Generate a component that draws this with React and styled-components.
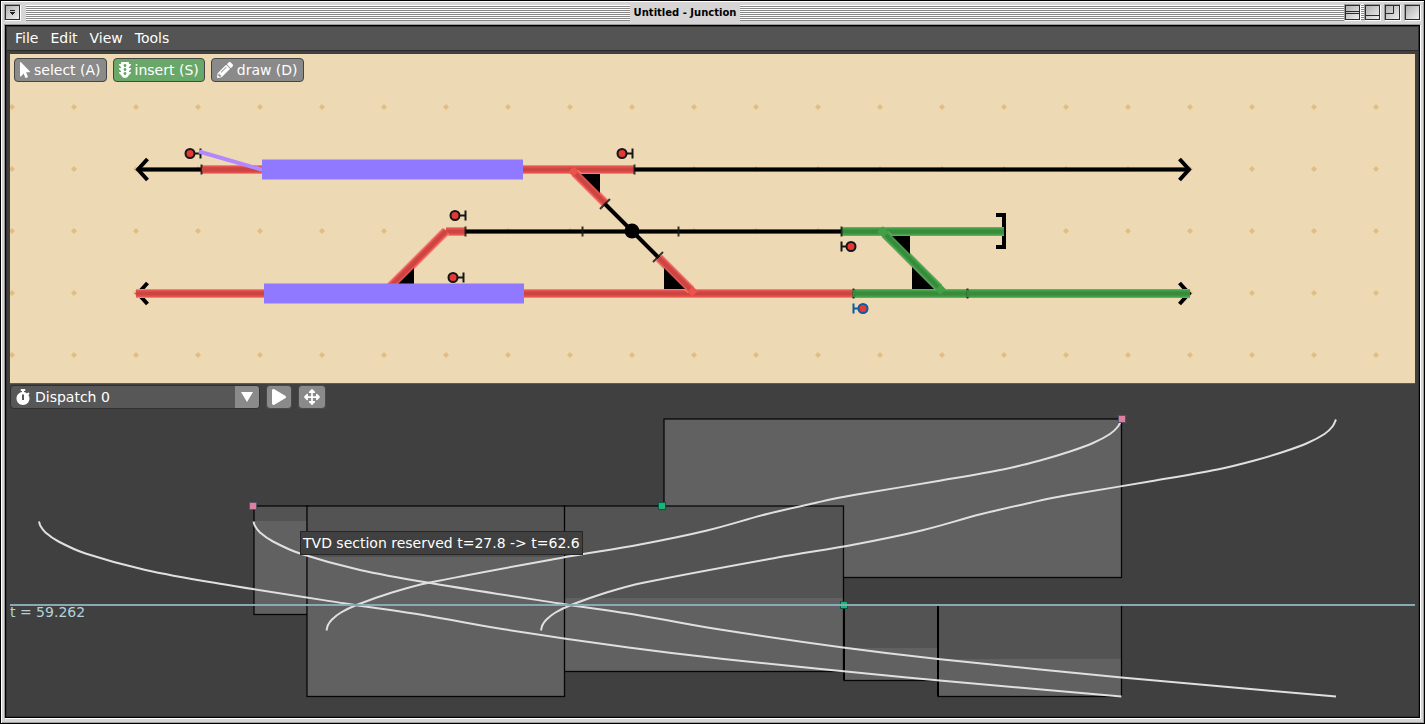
import React from "react";
import styled, { createGlobalStyle } from "styled-components";
import {
  FaMousePointer,
  FaTrafficLight,
  FaPencilAlt,
  FaStopwatch,
  FaPlay,
  FaArrowsAlt,
} from "react-icons/fa";

const GlobalStyle = createGlobalStyle`
  * { box-sizing: border-box; }
  body {
    margin: 0;
    font-family: "DejaVu Sans", Verdana, sans-serif;
    font-size: 14px;
    line-height: 16px;
    color: #fff;
  }
  button, select { font: inherit; color: inherit; }
`;

/* ---------- window frame ---------- */

const Window = styled.div`
  display: flex;
  flex-direction: column;
  min-height: 100vh;
  padding: 0 3px 4px;
  border: 1px solid #000;
  background: #d6d4d5;
  box-shadow: inset 1px 1px #fff, inset -1px -1px #a0a0a0;
`;

const TitleBar = styled.header`
  display: flex;
  align-items: center;
  height: 23px;
`;

const Stripes = styled.div`
  flex: 1 1 0;
  height: 16px;
  background: repeating-linear-gradient(#fff 0 1px, #888 1px 2px);
`;

const StripeGap = styled(Stripes)`
  flex: 0 0 3px;
  margin: 0 -3px;
`;

const Title = styled.h1`
  margin: 0;
  padding: 0 4px;
  font-size: 10px;
  line-height: 16px;
  font-weight: bold;
  color: #000;
`;

const FrameButton = styled.button`
  display: block;
  flex: none;
  width: 17px;
  height: 17px;
  padding: 0;
  border: 1px solid;
  border-color: #999 #fff #fff #999;
  background: linear-gradient(135deg, #aaa, #f4f4f4);

  svg {
    display: block;
  }
`;

const FrameButtons = styled.div`
  display: flex;
  gap: 3px;
`;

const MenuCorner = styled(FrameButtons)`
  padding-right: 5px;
`;

const Client = styled.div`
  flex: 1;
  display: flex;
  flex-direction: column;
  border: 1px solid;
  border-color: #999 #fff #fff #999;
  background: #404040;
`;

const ClientEdge = styled.div`
  flex: 1;
  display: flex;
  flex-direction: column;
  border: 1px solid #000;
  box-shadow: inset 0 0 0 1px #303030;
  padding: 1px;
`;

const MenuBar = styled.nav`
  display: flex;
  align-items: flex-start;
  gap: 12px;
  height: 24px;
  padding: 3px 8px;
  background: #545454;
  border-bottom: 1px solid #2b2b2b;
`;

const MenuItem = styled.button`
  padding: 0;
  border: 0;
  background: none;
`;

/* ---------- schematic ---------- */

const Workspace = styled.main`
  flex: 1;
  display: flex;
  flex-direction: column;
  padding: 3px 3px 0;
`;

const Schematic = styled.section`
  position: relative;
  height: 330px;
  background: #eed9b5;
  border-bottom: 1px solid #5f5e56;
`;

const Drawing = styled.svg`
  display: block;
  width: 100%;
  height: 100%;
`;

const ToolBar = styled.div`
  position: absolute;
  top: 4px;
  left: 4px;
  display: flex;
  gap: 6px;
`;

const ToolButton = styled.button`
  display: flex;
  align-items: center;
  gap: 4px;
  height: 24px;
  padding: 0 5px;
  border: 1px solid #454545;
  border-radius: 4px;
  background: ${(p) => (p.$active ? "#69a869" : "#8a8a8a")};
  white-space: nowrap;

  svg {
    flex: none;
    width: ${(p) => p.$iconWidth};
    height: 16px;
  }
`;

/* ---------- dispatch ---------- */

const DispatchBar = styled.div`
  display: flex;
  gap: 6px;
  margin-top: 1px;
`;

const Combo = styled.div`
  display: grid;
  grid-template-columns: 24px 1fr 24px;
  align-items: center;
  justify-items: center;
  width: 250px;
  height: 24px;
  border: 1px solid #303030;
  border-radius: 4px;
  overflow: hidden;
  background: #575757;
`;

const ComboIcon = styled.span`
  grid-row: 1;
  grid-column: 1;
  display: grid;
  place-items: center;
  width: 24px;
  height: 22px;
  z-index: 1;
  pointer-events: none;
`;

const ComboArrow = styled(ComboIcon)`
  grid-column: 3;
  background: #8a8a8a;
`;

const ComboSelect = styled.select`
  grid-row: 1;
  grid-column: 1 / -1;
  width: 100%;
  height: 22px;
  padding: 0 24px;
  border: 0;
  appearance: none;
  background: transparent;
`;

const IconButton = styled.button`
  display: grid;
  place-items: center;
  width: ${(p) => (p.$wide ? "28px" : "26px")};
  height: 24px;
  padding: 0;
  border: 1px solid #4a4a4a;
  border-radius: 4px;
  background: #8a8a8a;
`;

const Chart = styled.section`
  position: relative;
  flex: 1 0 307px;
  display: flex;

  text {
    font-size: 14px;
    fill: #b3d3da;
  }
`;

const Tooltip = styled.div`
  position: absolute;
  left: 290px;
  top: 122px;
  height: 24px;
  padding: 3px 2px;
  border: 1px solid #262626;
  background: #404040;
  white-space: nowrap;
`;

/* ---------- schematic drawing ---------- */

const RED = ["#f0837a", "#e7544f", "#cc4541"];
const GREEN = ["#64ad62", "#43a047", "#388a3c"];

function Plain({ d }) {
  return (
    <g fill="none" stroke="#000">
      <path d={d} strokeWidth="5" strokeOpacity="0.6" />
      <path d={d} strokeWidth="3" />
    </g>
  );
}

function Route({ d, colors }) {
  return (
    <g fill="none">
      <path d={d} stroke={colors[0]} strokeWidth="9" />
      <path d={d} stroke={colors[1]} strokeWidth="7" />
      <path d={d} stroke={colors[2]} strokeWidth="4" />
    </g>
  );
}

function Signal({ x, y, facing = 1, color = "#161616" }) {
  return (
    <g stroke={color} fill="none">
      <path d={`M${x} ${y}h${10 * facing}`} strokeWidth="2" />
      <path d={`M${x + 10 * facing + 0.5} ${y - 5}v10`} strokeWidth="2" />
      <circle cx={x} cy={y} r="4.5" fill="#e53935" strokeWidth="2" />
    </g>
  );
}

const JOINTS = [
  [201.5, 169.5],
  [634.5, 169.5],
  [465.5, 231.5],
  [582.5, 231.5],
  [678.5, 231.5],
  [841.5, 231.5],
  [853.5, 293.5],
  [967.5, 293.5],
];

function TrackPlan() {
  return (
    <Drawing role="img" aria-label="Track plan">
      <defs>
        <pattern id="grid" x="-29" y="22" width="62" height="62" patternUnits="userSpaceOnUse">
          <path d="M31 28l3 3l-3 3l-3-3z" fill="#e0bd82" />
        </pattern>
      </defs>
      <rect width="100%" height="100%" fill="url(#grid)" />
      <g transform="translate(-10 -54)">
        <g fill="none" stroke="#000" strokeWidth="4">
          <path d="M147.500 159L138 169.500L147.500 180" />
          <path d="M147.500 283L138 293.500L147.500 304" />
          <path d="M1179.500 159L1189 169.500L1179.500 180" />
          <path d="M1179.500 283L1189 293.500L1179.500 304" />
          <path d="M996 215H1004V247H996" />
        </g>

        <Plain d="M138 169.500H201M634 169.500H1189" />
        <Plain d="M465 231.500H842" />
        <path d="M604 203L659 258" stroke="#000" strokeWidth="4" />
        <circle cx="632" cy="231" r="7.500" />

        <Route d="M201 169.500H634" colors={RED} />
        <Route d="M136 293.500H853" colors={RED} />
        <Route d="M446 231.500H465" colors={RED} />
        <Route d="M841 231.500H1004" colors={GREEN} />
        <Route d="M853 293.500H1190" colors={GREEN} />

        <Route d="M446 231L384 293" colors={RED} />
        <Route d="M575 173L605 203" colors={RED} />
        <Route d="M659 258L691 290" colors={RED} />
        <Route d="M885 234L939 288" colors={GREEN} />
        <g strokeWidth="8">
          <path d="M571 169L576 174M690 289L695 294" stroke="#ec524e" />
          <path d="M880 229L886 235M938 287L943 292" stroke="#43a047" />
        </g>

        <path d="M581 174H600V193z" />
        <path d="M664 268V289H685z" />
        <path d="M414 268V289H393z" />
        <path d="M892 236H910V254z" />
        <path d="M912 267V289H934z" />

        <g fill="none" stroke="#161616" strokeOpacity="0.85" strokeWidth="2">
          {JOINTS.map(([x, y]) => (
            <path key={`${x}-${y}`} d={`M${x} ${y - 5}v10`} />
          ))}
          <path d="M600 209L610 199M653 262L663 252" />
        </g>
        <path d="M202 169.500H262" stroke="#cc4541" strokeWidth="4" />
        <path d="M968 290V297M854 290V297" stroke="#388a3c" strokeWidth="3" />

        <Signal x={190} y={153.5} />
        <Signal x={622} y={153.5} />
        <Signal x={455} y={215.5} />
        <Signal x={453} y={277.5} />
        <Signal x={851} y={246.5} facing={-1} />
        <Signal x={863} y={308.5} facing={-1} color="#0b5aa2" />

        <path d="M199 151.500L263 170" stroke="#b388ff" strokeWidth="4" />
        <g fill="#9179ff">
          <rect x="262" y="159.500" width="261" height="20" />
          <rect x="264" y="283.500" width="260" height="20" />
        </g>
      </g>
    </Drawing>
  );
}

/* ---------- time/distance chart ---------- */

const SECTIONS = [
  { x: 664, y: 419, w: 457, h: 158, split: 0 },
  { x: 254, y: 506, w: 53, h: 108, split: 15 },
  { x: 564, y: 506, w: 279, h: 165, split: 92 },
  { x: 307, y: 506, w: 257, h: 190, split: 51 },
  { x: 844, y: 605, w: 94, h: 75, split: 43 },
  { x: 938, y: 605, w: 183, h: 91, split: 54 },
];

const DOWN = [
  [253.5, 521.5], [255, 526], [260, 532.5], [273, 541.5], [300, 553.5],
  [360, 570], [433, 583.5], [560, 603.5], [640, 615.5], [720, 629.5],
  [843, 647.5], [938, 659], [1121.5, 677.5], [1336, 696.5],
];

const UP = [
  [326.5, 630.5], [328, 625], [332, 619.5], [341, 612.5], [356.5, 605],
  [392, 592.5], [430, 582.5], [563, 557.5], [640, 544.5], [707, 530.5],
  [767, 514], [817, 502.5], [843, 497], [938, 481], [1003, 469.5],
  [1040, 460.5], [1070, 451.5], [1093, 443], [1110, 434], [1118, 426.5],
  [1121.5, 419.5],
];

const TRAIN_LENGTH = 214.5;

const shift = (points, dx) => points.map(([x, y]) => [x + dx, y]);

/* Smooth spline through the points, written as cubic segments. */
function smooth(points) {
  const at = (i) => points[Math.max(0, Math.min(points.length - 1, i))];
  const len = (p, q) => Math.hypot(q[0] - p[0], q[1] - p[1]);
  let d = `M${points[0].join(" ")}`;
  for (let i = 0; i < points.length - 1; i += 1) {
    const [a, b, c, e] = [at(i - 1), at(i), at(i + 1), at(i + 2)];
    const span = len(b, c);
    const tangent = (p, q) => {
      const l = len(p, q) || 1;
      return [((q[0] - p[0]) / l) * (span / 3), ((q[1] - p[1]) / l) * (span / 3)];
    };
    const t1 = tangent(a, c);
    const t2 = tangent(b, e);
    d += `C${b[0] + t1[0]} ${b[1] + t1[1]} ${c[0] - t2[0]} ${c[1] - t2[1]} ${c[0]} ${c[1]}`;
  }
  return d;
}

const CURVES = [DOWN, shift(DOWN, -TRAIN_LENGTH), UP, shift(UP, TRAIN_LENGTH)];

const HANDLES = [
  { x: 253, y: 506, fill: "#df7f9f", edge: "#5c5268" },
  { x: 1122, y: 419, fill: "#df7f9f", edge: "#5c5268" },
  { x: 662, y: 506, fill: "#18b777", edge: "#0c5547" },
  { x: 844, y: 605, fill: "#18b777", edge: "#0c5547" },
];

function TimeChart() {
  return (
    <Drawing role="img" aria-label="Time and distance diagram">
      <g transform="translate(-10 -409)">
        {SECTIONS.map((s) => (
          <g key={`${s.x}-${s.y}`}>
            <rect x={s.x} y={s.y} width={s.w} height={s.h} fill="#535353" />
            <rect x={s.x} y={s.y + s.split} width={s.w} height={s.h - s.split} fill="#616161" />
            <rect
              x={s.x}
              y={s.y}
              width={s.w + 0.5}
              height={s.h + 0.5}
              fill="none"
              stroke="#000"
              strokeWidth="1.3"
              strokeOpacity="0.9"
            />
          </g>
        ))}
        <path d="M844 605V680M938 605V696" stroke="#000" strokeWidth="2" />
        {CURVES.map((points, i) => (
          <path key={i} d={smooth(points)} fill="none" stroke="#e0e0e0" strokeWidth="2" />
        ))}
        {HANDLES.map((h) => (
          <rect
            key={`${h.x}-${h.y}`}
            x={h.x - 3.5}
            y={h.y - 3.5}
            width="7"
            height="7"
            fill={h.fill}
            stroke={h.edge}
          />
        ))}
      </g>
      <rect y="195" width="100%" height="2" fill="#84abb6" />
      <text x="0" y="208">t = 59.262</text>
    </Drawing>
  );
}

/* ---------- title bar glyphs ---------- */

function BoxGlyph({ d }) {
  return (
    <svg width="15" height="15" fill="none" stroke="#2b2b2b" aria-hidden="true">
      <rect x="0.500" y="0.500" width="14" height="14" />
      <path d={d} />
    </svg>
  );
}

export default function App() {
  return (
    <Window>
      <GlobalStyle />
      <TitleBar>
        <MenuCorner>
          <FrameButton aria-label="Window menu">
            <svg width="15" height="15" aria-hidden="true">
              <rect x="0.500" y="0.500" width="14" height="14" fill="none" stroke="#2b2b2b" />
              <path d="M5 5h5v1h-5zM5 7h5v1h-1v1h-1v1h-1v-1h-1v-1h-1z" fill="#222" />
            </svg>
          </FrameButton>
        </MenuCorner>
        <Stripes />
        <Title>Untitled - Junction</Title>
        <Stripes />
        <FrameButtons>
          <FrameButton aria-label="Shade">
            <BoxGlyph d="M1 6.500h13M1 8.500h13" />
          </FrameButton>
          <StripeGap />
          <FrameButton aria-label="Minimize">
            <BoxGlyph d="M1 10.500h13" />
          </FrameButton>
          <FrameButton aria-label="Maximize">
            <BoxGlyph d="M1 8.500h7.500v-7.500" />
          </FrameButton>
          <FrameButton aria-label="Close">
            <BoxGlyph d="" />
          </FrameButton>
        </FrameButtons>
      </TitleBar>
      <Client>
        <ClientEdge>
          <MenuBar>
            <MenuItem>File</MenuItem>
            <MenuItem>Edit</MenuItem>
            <MenuItem>View</MenuItem>
            <MenuItem>Tools</MenuItem>
          </MenuBar>
          <Workspace>
            <Schematic>
              <TrackPlan />
              <ToolBar>
                <ToolButton $iconWidth="10px">
                  <FaMousePointer />
                  select (A)
                </ToolButton>
                <ToolButton $iconWidth="12px" $active>
                  <FaTrafficLight />
                  insert (S)
                </ToolButton>
                <ToolButton $iconWidth="16px">
                  <FaPencilAlt />
                  draw (D)
                </ToolButton>
              </ToolBar>
            </Schematic>
            <DispatchBar>
              <Combo>
                <ComboIcon>
                  <FaStopwatch size={16} />
                </ComboIcon>
                <ComboSelect aria-label="Dispatch" defaultValue="0">
                  <option value="0">Dispatch 0</option>
                </ComboSelect>
                <ComboArrow>
                  <svg width="12" height="10" aria-hidden="true">
                    <path d="M0 0h12l-6 10z" fill="#fff" />
                  </svg>
                </ComboArrow>
              </Combo>
              <IconButton aria-label="Play">
                <FaPlay size={16} />
              </IconButton>
              <IconButton $wide aria-label="Fit view">
                <FaArrowsAlt size={16} />
              </IconButton>
            </DispatchBar>
            <Chart>
              <TimeChart />
              <Tooltip role="tooltip">TVD section reserved t=27.8 -&gt; t=62.6</Tooltip>
            </Chart>
          </Workspace>
        </ClientEdge>
      </Client>
    </Window>
  );
}
